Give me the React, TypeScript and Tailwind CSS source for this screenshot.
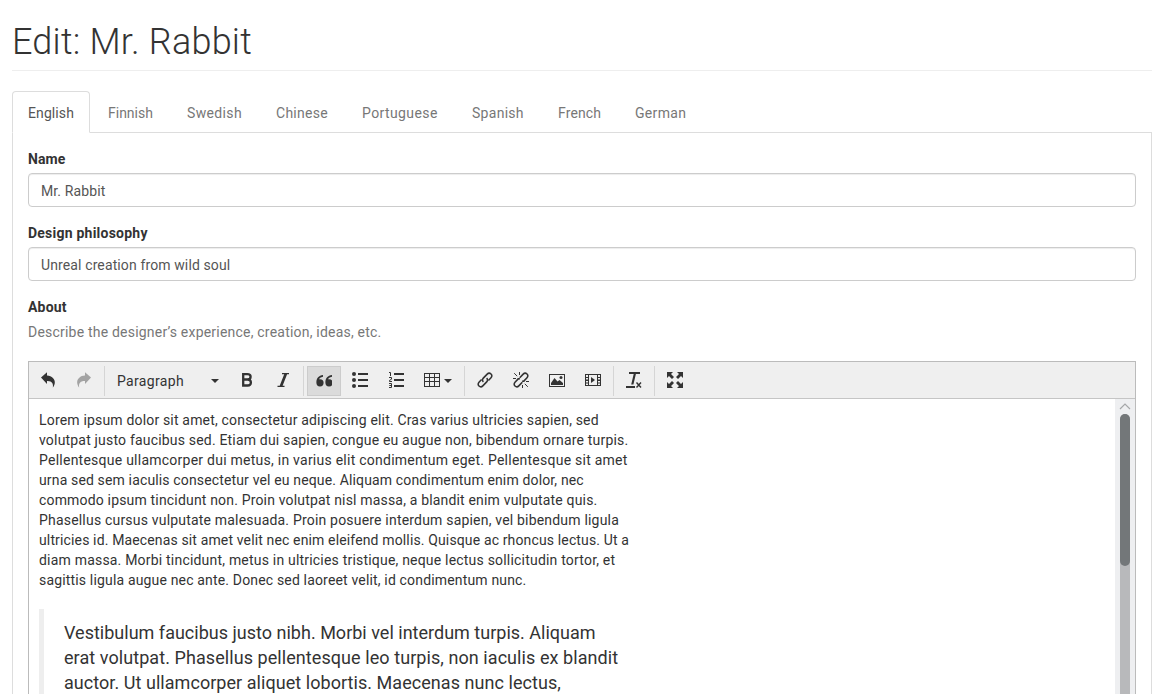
import React from 'react';

const tabs: { label: string; size: string }[] = [
  { label: 'English', size: 'w-[78px] tracking-[0.1px]' },
  { label: 'Finnish', size: 'w-[77px]' },
  { label: 'Swedish', size: 'w-[87px] tracking-[0.36px]' },
  { label: 'Chinese', size: 'w-[84px] tracking-[0.27px]' },
  { label: 'Portuguese', size: 'w-[108px] tracking-[0.4px]' },
  { label: 'Spanish', size: 'w-[84px] tracking-[0.28px]' },
  { label: 'French', size: 'w-[75px] tracking-[0.12px]' },
  { label: 'German', size: 'w-[84px] tracking-[0.33px]' },
];

const aboutLines: { text: string; tracking: string }[] = [
  {
    text: 'Lorem ipsum dolor sit amet, consectetur adipiscing elit. Cras varius ultricies sapien, sed',
    tracking: 'tracking-[0.178px]',
  },
  {
    text: 'volutpat justo faucibus sed. Etiam dui sapien, congue eu augue non, bibendum ornare turpis.',
    tracking: 'tracking-[0.187px]',
  },
  {
    text: 'Pellentesque ullamcorper dui metus, in varius elit condimentum eget. Pellentesque sit amet',
    tracking: 'tracking-[0.247px]',
  },
  {
    text: 'urna sed sem iaculis consectetur vel eu neque. Aliquam condimentum enim dolor, nec',
    tracking: 'tracking-[0.146px]',
  },
  {
    text: 'commodo ipsum tincidunt non. Proin volutpat nisl massa, a blandit enim vulputate quis.',
    tracking: 'tracking-[0.174px]',
  },
  {
    text: 'Phasellus cursus vulputate malesuada. Proin posuere interdum sapien, vel bibendum ligula',
    tracking: 'tracking-[0.193px]',
  },
  {
    text: 'ultricies id. Maecenas sit amet velit nec enim eleifend mollis. Quisque ac rhoncus lectus. Ut a',
    tracking: 'tracking-[0.14px]',
  },
  {
    text: 'diam massa. Morbi tincidunt, metus in ultricies tristique, neque lectus sollicitudin tortor, et',
    tracking: 'tracking-[0.2px]',
  },
  {
    text: 'sagittis ligula augue nec ante. Donec sed laoreet velit, id condimentum nunc.',
    tracking: 'tracking-[0.165px]',
  },
];

const quoteLines: { text: string; tracking: string }[] = [
  { text: 'Vestibulum faucibus justo nibh. Morbi vel interdum turpis. Aliquam', tracking: 'tracking-[0.01px]' },
  { text: 'erat volutpat. Phasellus pellentesque leo turpis, non iaculis ex blandit', tracking: 'tracking-[0.07px]' },
  { text: 'auctor. Ut ullamcorper aliquet lobortis. Maecenas nunc lectus,', tracking: 'tracking-[0.05px]' },
];

function Icon({ children }: { children: React.ReactNode }) {
  return (
    <svg className="block h-4 w-4 shrink-0" viewBox="0 0 16 16" fill="currentColor">
      {children}
    </svg>
  );
}

function Tool({ children, active, faded }: { children: React.ReactNode; active?: boolean; faded?: boolean }) {
  return (
    <button
      className={`mr-0.5 flex h-[30px] w-[34px] shrink-0 items-start justify-center border pt-[5px] ${
        active ? 'border-[#ccc] bg-[#dbdbdb]' : 'border-transparent'
      } ${faded ? 'opacity-40' : ''}`}
    >
      <Icon>{children}</Icon>
    </button>
  );
}

function Separator() {
  return <div className="ml-px mr-[3px] h-[30px] w-px shrink-0 bg-[#d5d5d5]" />;
}

function Caret() {
  return (
    <svg className="block h-1 w-2 shrink-0" viewBox="0 0 8 4" fill="currentColor">
      <path d="M0 0h8L4 4z" />
    </svg>
  );
}

function Field({ label, value, tracking = '' }: { label: string; value: string; tracking?: string }) {
  return (
    <div className="mb-4">
      <label className={`mb-1 block h-5 font-bold ${tracking}`}>{label}</label>
      <div className="h-[34px] rounded-[4px] border border-[#ccc] px-3 pt-[7px] tracking-[0.12px] text-[#555] shadow-[inset_0_1px_1px_rgba(0,0,0,0.075)]">
        {value}
      </div>
    </div>
  );
}

const undoPath = 'M1 5.6 7 .2v3.3c5 .1 8.2 3.8 7.8 7.5-.2 1.8-1 3.5-2 4.6.8-3.6-.6-7-5.8-6.7v3z';

export default function App() {
  return (
    <div className="h-[694px] overflow-hidden bg-white pl-3 pr-4 font-['Roboto','Liberation_Sans',sans-serif] text-[14px] leading-5 text-[#333]">
      <header className="h-[71px] border-b border-[#eee] pt-[22px]">
        <h1 className="text-[36px] font-light leading-10 tracking-[0.22px]">Edit: Mr. Rabbit</h1>
      </header>

      <nav className="mt-5 flex h-[42px] border-b border-[#ddd]">
        {tabs.map((tab, i) => (
          <div
            key={tab.label}
            className={`mr-0.5 h-[42px] shrink-0 rounded-t-[4px] border pl-[15px] pt-[11px] ${tab.size} ${
              i === 0 ? 'border-[#ddd] border-b-white bg-white text-[#555]' : 'border-transparent text-[#777]'
            }`}
          >
            {tab.label}
          </div>
        ))}
      </nav>

      <main className="h-[600px] border-x border-[#ddd] px-[15px] pt-4">
        <Field label="Name" value="Mr. Rabbit" tracking="tracking-[0.1px]" />
        <Field label="Design philosophy" value="Unreal creation from wild soul" tracking="tracking-[0.23px]" />
        <div className="h-5 font-bold tracking-[0.2px]">About</div>
        <p className="mt-[5px] h-5 tracking-[0.21px] text-[#777]">
          Describe the designer’s experience, creation, ideas, etc.
        </p>

        <section className="mt-[19px] h-[400px] border border-[#bbb]">
          <div className="flex h-[37px] items-start border-b border-[#c5c5c5] bg-[#efefef] pl-0.5 pt-1">
            <Tool>
              <path d={undoPath} />
            </Tool>
            <Tool faded>
              <path d={undoPath} transform="matrix(-1 0 0 1 16 0)" />
            </Tool>
            <Separator />
            <button className="mr-0.5 flex h-[30px] w-[120px] shrink-0 items-center justify-between pl-[9px] pr-[9px]">
              <span className="tracking-[0.33px]">Paragraph</span>
              <Caret />
            </button>
            <Tool>
              <path
                d="M4.2 2.1h4.1c2.1 0 3.3 1 3.3 2.6 0 1.7-1.2 2.7-3.3 2.7H4.2zM4.2 7.6h4.5c2.2 0 3.2 1.1 3.2 2.9 0 1.9-1.1 3-3.2 3H4.2z"
                fill="none"
                stroke="currentColor"
                strokeWidth="2.3"
              />
            </Tool>
            <Tool>
              <path d="M7 1h7v1.3h-1.9L7.6 13.7h1.9V15h-7v-1.3h2.2L9.2 2.3H7z" />
            </Tool>
            <Separator />
            <Tool active>
              <path d="M4 7.2a3.6 3.6 0 1 1-3.6 3.6C.2 6.4 2.6 3.5 7 3v1.7C4.6 5.1 3.4 6 3.1 7.3zM13 7.2a3.6 3.6 0 1 1-3.6 3.6C9.2 6.4 11.6 3.5 16 3v1.7c-2.4.4-3.6 1.3-3.9 2.6z" />
            </Tool>
            <Tool>
              <circle cx="2" cy="2" r="2" />
              <circle cx="2" cy="8" r="2" />
              <circle cx="2" cy="14" r="2" />
              <path d="M6 1h10v2H6zM6 7h10v2H6zM6 13h10v2H6z" />
            </Tool>
            <Tool>
              <path d="M6 1h10v2H6zM6 7h10v2H6zM6 13h10v2H6z" />
              <path
                d="M1 .5h1.5V4M1 5.5h2.5v1.7L1.5 8.4v1.1H4M1 11.5h2.5v4H1M1.3 13.5h2.2"
                fill="none"
                stroke="currentColor"
              />
            </Tool>
            <button className="mr-0.5 flex h-[30px] w-[46px] shrink-0 items-start gap-1 pl-[9px] pt-1.5">
              <Icon>
                <path
                  fillRule="evenodd"
                  d="M0 1h16v14H0zM1 2v3h4V2zM6 2v3h4V2zM11 2v3h4V2zM1 6v3h4V6zM6 6v3h4V6zM11 6v3h4V6zM1 10v4h4v-4zM6 10v4h4v-4zM11 10v4h4v-4z"
                />
              </Icon>
              <div className="pt-[7px]">
                <Caret />
              </div>
            </button>
            <Separator />
            <Tool>
              <g fill="none" stroke="currentColor" strokeWidth="1.6">
                <path d="M6.4 9.9c-1.2-1-1.2-2.7-.1-3.8l3.9-4c1.1-1.1 2.7-1.1 3.8-.1s1.1 2.7 0 3.8l-2.6 2.7" />
                <path d="M9.6 6.1c1.2 1 1.2 2.7.1 3.8l-3.9 4c-1.1 1.1-2.7 1.1-3.8.1s-1.1-2.7 0-3.8l2.6-2.7" />
              </g>
            </Tool>
            <Tool>
              <g fill="none" stroke="currentColor" strokeWidth="1.6">
                <path d="M6.7 5.7l3.5-3.6c1.1-1.1 2.7-1.1 3.8-.1s1.1 2.7 0 3.8l-3.2 3.3-1.7.1" />
                <path d="M9.3 10.3l-3.5 3.6c-1.1 1.1-2.7 1.1-3.8.1s-1.1-2.7 0-3.8l3.2-3.3 1.7-.1" />
              </g>
              <path
                d="M1.2 1.2l3 3M6.5 0v3M0 6.5h3M14.8 14.8l-3-3M9.5 16v-3M16 9.5h-3"
                fill="none"
                stroke="currentColor"
              />
            </Tool>
            <Tool>
              <path fillRule="evenodd" d="M0 2h16v13H0zM1 3v11h14V3z" />
              <path d="M2 13v-2l3.5-5 3 3.5L10.5 8 14 11v2z" />
              <circle cx="12" cy="5.5" r="1.5" />
            </Tool>
            <Tool>
              <path
                fillRule="evenodd"
                d="M0 2h16v12H0zM1 3v2h2V3zM1 6v1.5h2V6zM1 9v1.5h2V9zM1 11.5V13h2v-1.5zM4 3v10h8V3zM13 3v2h2V3zM13 6v1.5h2V6zM13 9v1.5h2V9zM13 11.5V13h2v-1.5z"
              />
              <path d="M6 5v6l4-3z" />
            </Tool>
            <Separator />
            <Tool>
              <path d="M3 0h11v2H9.9L7.4 12.5H5.2L7.7 2H3zM0 14h9v2H0z" />
              <path d="M10.5 10.5l4.5 5M15 10.5l-4.5 5" fill="none" stroke="currentColor" strokeWidth="1.4" />
            </Tool>
            <Separator />
            <Tool>
              <path d="M0 0h6L4 2l3 3-2 2-3-3-2 2zM16 0v6l-2-2-3 3-2-2 3-3-2-2zM0 16v-6l2 2 3-3 2 2-3 3 2 2zM16 16h-6l2-2-3-3 2-2 3 3 2-2z" />
            </Tool>
          </div>

          <div className="flex h-[361px] justify-between">
            <article className="pl-2.5 pt-[11px]">
              <div className="whitespace-nowrap">
                {aboutLines.map((line) => (
                  <div key={line.text} className={line.tracking}>
                    {line.text}
                  </div>
                ))}
              </div>
              <blockquote className="mt-[19px] h-40 whitespace-nowrap border-l-[5px] border-[#eee] pl-5 pt-[11px] text-[18px] leading-[25px]">
                {quoteLines.map((line) => (
                  <div key={line.text} className={line.tracking}>
                    {line.text}
                  </div>
                ))}
              </blockquote>
            </article>
            <div className="flex w-5 flex-col items-center bg-[#eeeff1]">
              <svg className="h-[15px] w-3 shrink-0" viewBox="0 0 12 15" fill="none" stroke="#a5a7a9" strokeWidth="1.2">
                <path d="M1 10l5-5 5 5" />
              </svg>
              <div className="w-2.5 flex-1 rounded-t-[5px] bg-[#b8b9bb]">
                <div className="h-[152px] rounded-[5px] bg-[#737779]" />
              </div>
            </div>
          </div>
        </section>
      </main>
    </div>
  );
}
